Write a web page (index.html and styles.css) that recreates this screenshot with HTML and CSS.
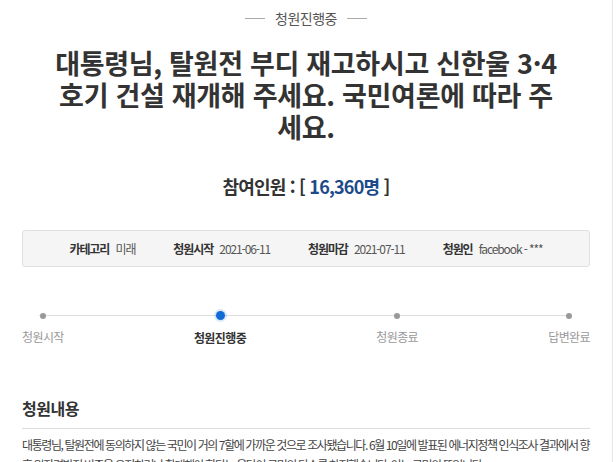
FILE: index.html
```html
<!DOCTYPE html>
<html lang="ko">
<head>
<meta charset="utf-8">
<link rel="stylesheet" href="styles.css">
</head>
<body>
<div class="page">
  <div class="status"><span class="dash"></span><span class="status-text">청원진행중</span><span class="dash"></span></div>
  <h1 class="title">대통령님, 탈원전 부디 재고하시고 신한울 3·4 호기 건설 재개해 주세요. 국민여론에 따라 주세요.</h1>
  <div class="count">참여인원 : [ <span class="num">16,360명</span> ]</div>
  <ul class="info">
    <li><b>카테고리</b> 미래</li>
    <li><b>청원시작</b> 2021-06-11</li>
    <li><b>청원마감</b> 2021-07-11</li>
    <li><b>청원인</b> facebook - ***</li>
  </ul>
  <div class="progress">
    <div class="step"><span class="dot"></span><span class="label">청원시작</span></div>
    <div class="step active"><span class="dot"></span><span class="label">청원진행중</span></div>
    <div class="step"><span class="dot"></span><span class="label">청원종료</span></div>
    <div class="step"><span class="dot"></span><span class="label">답변완료</span></div>
  </div>
  <h2 class="section">청원내용</h2>
  <div class="content">
    <p>대통령님, 탈원전에 동의하지 않는 국민이 거의 7할에 가까운 것으로 조사됐습니다. 6월 10일에 발표된 에너지정책 인식조사 결과에서 향후 원자력발전 비중을 유지하거나 확대해야 한다는 응답이 국민의 다수를 차지했습니다. 이는 국민의 뜻입니다.</p>
  </div>
</div>
</body>
</html>
```
FILE: styles.css
```css
* { box-sizing: border-box; }
html, body { margin: 0; padding: 0; background: #fff; }
body {
  font-family: "Noto Sans CJK KR", "Noto Sans", sans-serif;
  color: #333;
  overflow: hidden;
}
.page {
  width: 613px;
  height: 462px;
  border-right: 1px solid #e6e6e6;
  padding: 8px 22px 0 22px;
  overflow: hidden;
}
.status {
  display: flex;
  align-items: center;
  justify-content: center;
  gap: 10px;
  height: 20px;
}
.status-text {
  font-size: 14px;
  color: #555;
  letter-spacing: -0.5px;
}
.dash {
  width: 20px;
  height: 1px;
  background: #aaa;
}
.title {
  margin: 19px auto 0;
  width: 510px;
  text-align: center;
  font-size: 27px;
  line-height: 32px;
  font-weight: 700;
  letter-spacing: -0.3px;
  color: #333;
}
.count {
  margin-top: 30px;
  text-align: center;
  font-size: 18px;
  font-weight: 700;
  letter-spacing: -0.8px;
  color: #333;
}
.count .num { color: #1c4a8a; }
.info {
  list-style: none;
  margin: 31px 0 0;
  padding: 0;
  height: 37px;
  display: flex;
  align-items: center;
  justify-content: center;
  gap: 38px;
  background: #f5f5f5;
  border: 1px solid #e0e0e0;
  border-radius: 3px;
  font-size: 12px;
  letter-spacing: -1.1px;
  color: #555;
}
.info b { color: #333; font-weight: 700; margin-right: 4px; }
.progress {
  position: relative;
  margin-top: 44px;
  display: flex;
  justify-content: space-between;
}
.progress::before {
  content: "";
  position: absolute;
  left: 17px;
  right: 18px;
  top: 4px;
  height: 1px;
  background: #ddd;
}
.step {
  position: relative;
  display: flex;
  flex-direction: column;
  align-items: center;
  gap: 9px;
}
.dot {
  width: 6px;
  height: 6px;
  margin-top: 2px;
  border-radius: 50%;
  background: #999;
}
.active .dot {
  width: 9px;
  height: 9px;
  margin-top: 0;
  background: #0f6bd6;
  box-shadow: 0 0 0 2px rgba(15,107,214,0.15);
}
.label {
  font-size: 12px;
  color: #999;
  letter-spacing: -0.6px;
}
.active .label { color: #333; font-weight: 700; }
.section {
  margin: 50px 0 0;
  padding-bottom: 8px;
  border-bottom: 1px solid #ddd;
  font-size: 16px;
  font-weight: 700;
  letter-spacing: -0.5px;
  color: #333;
}
.content p {
  margin: 6px 0 0;
  font-size: 12px;
  line-height: 20px;
  letter-spacing: -1.4px;
  color: #444;
}
```
